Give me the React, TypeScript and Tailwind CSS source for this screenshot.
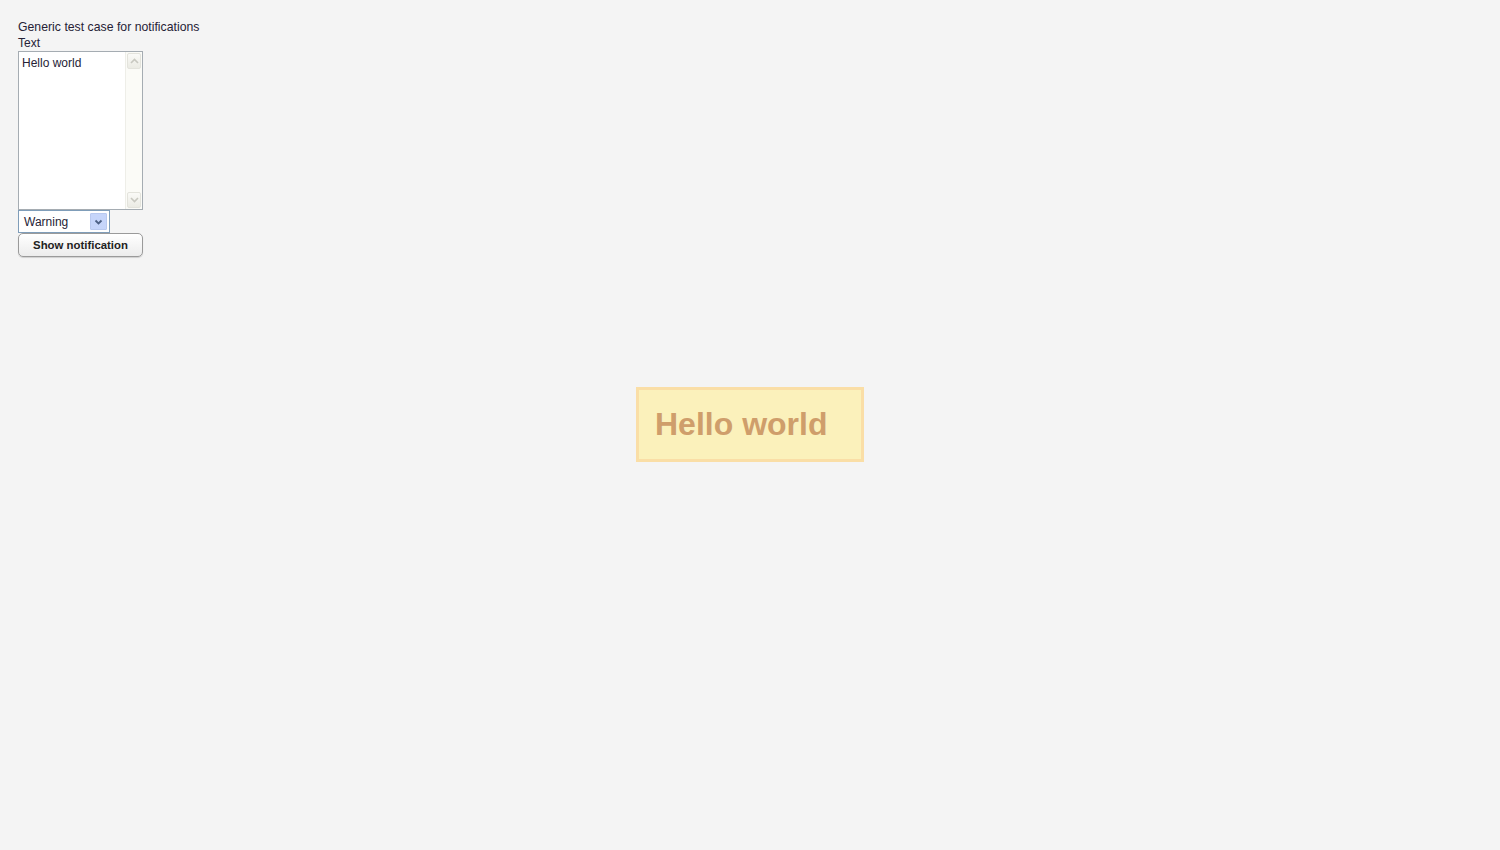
import { useState } from 'react'

export default function App() {
  const [text, setText] = useState('Hello world')

  return (
    <div className="min-h-[850px] bg-[#f4f4f4] px-[18px] pt-[19px] text-[12px] leading-[16px] text-[#262236] font-['Liberation_Sans',Arial,sans-serif]">
      <div className="text-[12.25px] tracking-[0.01px]">Generic test case for notifications</div>
      <div className="mt-[1px] leading-[15px]">Text</div>

      {/* textarea with old-style scrollbar */}
      <div className="flex w-[125px] h-[159px] border border-[#a5acb2] bg-white">
        <textarea
          value={text}
          onChange={(e) => setText(e.target.value)}
          className="flex-1 resize-none outline-none px-[3px] pt-[3px] text-[12px] leading-[16px] text-[#262236] bg-white overflow-hidden"
        />
        <div className="w-[17px] flex flex-col justify-between bg-[#fbfbf7] border-l border-[#eeeee8]">
          <div className="h-[16px] mx-[1px] mt-[1px] flex items-center justify-center rounded-[2px] border border-[#e3e3dc] bg-gradient-to-b from-[#fafaf7] to-[#ebebe4]">
            <svg width="9" height="6" viewBox="0 0 9 6">
              <path d="M1 5 L4.5 1.5 L8 5" stroke="#c8c8c0" strokeWidth="1.6" fill="none" />
            </svg>
          </div>
          <div className="h-[16px] mx-[1px] mb-[1px] flex items-center justify-center rounded-[2px] border border-[#e3e3dc] bg-gradient-to-b from-[#fafaf7] to-[#ebebe4]">
            <svg width="9" height="6" viewBox="0 0 9 6">
              <path d="M1 1 L4.5 4.5 L8 1" stroke="#c8c8c0" strokeWidth="1.6" fill="none" />
            </svg>
          </div>
        </div>
      </div>

      {/* select */}
      <div className="flex items-center w-[92px] h-[23px] border border-[#7f9db9] bg-white pl-[5px] pr-[2px]">
        <span className="flex-1 text-[12px] text-[#262236]">Warning</span>
        <div className="w-[17px] h-[17px] flex items-center justify-center rounded-[1px] border border-[#b9c9ef] bg-[#c6d5fa]">
          <svg width="9" height="6" viewBox="0 0 9 6">
            <path d="M1.5 1.5 L4.5 4.5 L7.5 1.5" stroke="#4d6185" strokeWidth="1.8" fill="none" />
          </svg>
        </div>
      </div>

      {/* button */}
      <button className="w-[125px] h-[24px] rounded-[5px] border border-[#9a9a9a] bg-gradient-to-b from-[#ffffff] to-[#ececec] text-[11.4px] font-bold text-[#222222] shadow-[0_1px_1px_rgba(0,0,0,0.15)]">
        Show notification
      </button>

      {/* notification overlay */}
      <div className="fixed inset-0 flex items-center justify-center pointer-events-none">
        <div className="w-[228px] h-[75px] mb-[1px] border-[3px] border-[#fadea6] bg-[#fbf1bb] pl-[16px] pt-[16px]">
          <span className="text-[32px] leading-[36px] font-bold text-[#cf9e6b] font-['Liberation_Sans',Arial,sans-serif]">
            Hello world
          </span>
        </div>
      </div>
    </div>
  )
}
